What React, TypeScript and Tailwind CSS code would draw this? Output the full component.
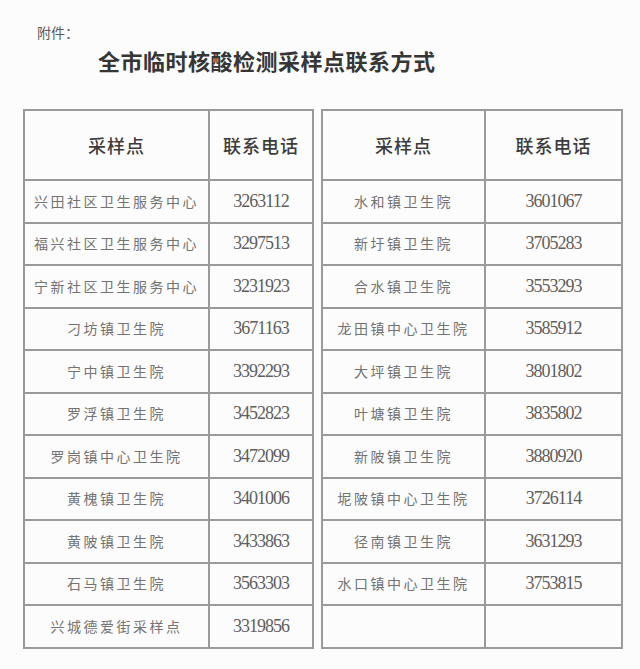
const left: [string, string][] = [
  ['兴田社区卫生服务中心', '3263112'],
  ['福兴社区卫生服务中心', '3297513'],
  ['宁新社区卫生服务中心', '3231923'],
  ['刁坊镇卫生院', '3671163'],
  ['宁中镇卫生院', '3392293'],
  ['罗浮镇卫生院', '3452823'],
  ['罗岗镇中心卫生院', '3472099'],
  ['黄槐镇卫生院', '3401006'],
  ['黄陂镇卫生院', '3433863'],
  ['石马镇卫生院', '3563303'],
  ['兴城德爱街采样点', '3319856'],
];

const right: [string, string][] = [
  ['水和镇卫生院', '3601067'],
  ['新圩镇卫生院', '3705283'],
  ['合水镇卫生院', '3553293'],
  ['龙田镇中心卫生院', '3585912'],
  ['大坪镇卫生院', '3801802'],
  ['叶塘镇卫生院', '3835802'],
  ['新陂镇卫生院', '3880920'],
  ['坭陂镇中心卫生院', '3726114'],
  ['径南镇卫生院', '3631293'],
  ['水口镇中心卫生院', '3753815'],
  ['', ''],
];

// widths are passed as full class names so tailwind picks them up
function SiteTable({ rows, tableW, nameW, telW }: { rows: [string, string][]; tableW: string; nameW: string; telW: string }) {
  return (
    <table className={`${tableW} table-fixed border-collapse border-2 border-[#9a9a9a]`}>
      <thead>
        <tr className="h-[70px]">
          <th className={`${nameW} border-2 border-[#9a9a9a] font-['Noto_Sans_CJK_SC',sans-serif] text-[18px] font-medium tracking-[1px] text-[#3c3c3c]`}>
            采样点
          </th>
          <th className={`${telW} border-2 border-[#9a9a9a] font-['Noto_Sans_CJK_SC',sans-serif] text-[18px] font-medium tracking-[1px] text-[#3c3c3c]`}>
            联系电话
          </th>
        </tr>
      </thead>
      <tbody>
        {rows.map(([name, tel], i) => (
          <tr key={i} className="h-[42.5px]">
            <td className="whitespace-nowrap border-2 border-[#9a9a9a] text-center font-['Noto_Sans_CJK_SC',sans-serif] text-[14px] tracking-[2.5px] text-[#737373]">
              {name}
            </td>
            <td className="border-2 border-[#9a9a9a] text-center font-['Liberation_Serif',serif] text-[18px] tracking-[-1px] text-[#5e5e5e]">
              {tel}
            </td>
          </tr>
        ))}
      </tbody>
    </table>
  );
}

export default function App() {
  return (
    <div className="h-[669px] w-[640px] overflow-hidden bg-[#fcfcfc]">
      <div className="pl-[37px] pt-[22px] font-['Noto_Sans_CJK_SC',sans-serif] text-[14px] text-[#5a5a5a]">附件：</div>
      <h1 className="ml-[98px] mt-[2px] font-['Noto_Sans_CJK_SC',sans-serif] text-[22px] font-bold leading-[30px] tracking-[0.5px] text-[#363636]">
        全市临时核酸检测采样点联系方式
      </h1>
      <div className="ml-[23px] mt-[34px] flex items-start gap-[7px]">
        <SiteTable rows={left} tableW="w-[289px]" nameW="w-[185px]" telW="w-[104px]" />
        <SiteTable rows={right} tableW="w-[300px]" nameW="w-[163px]" telW="w-[137px]" />
      </div>
    </div>
  );
}
